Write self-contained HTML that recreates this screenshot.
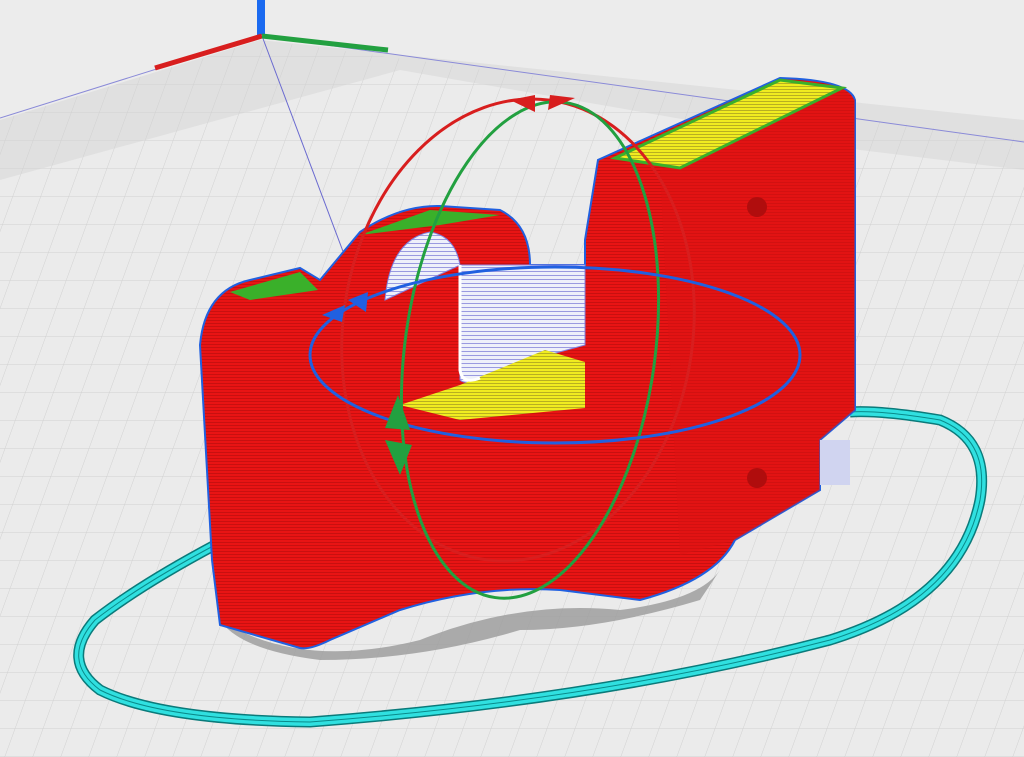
<!DOCTYPE html>
<html><head><meta charset="utf-8"><style>
html,body{margin:0;padding:0;width:1024px;height:757px;overflow:hidden;background:#e9e9e9}
svg{display:block}
</style></head><body>
<svg width="1024" height="757" viewBox="0 0 1024 757" xmlns="http://www.w3.org/2000/svg">
<defs>
<pattern id="g" width="28" height="28" patternUnits="userSpaceOnUse" patternTransform="skewX(-20)">
<path d="M28 0H0V28" fill="none" stroke="#d0d0d0" stroke-width="1"/>
</pattern>
<pattern id="rl" width="4" height="3" patternUnits="userSpaceOnUse">
<rect width="4" height="3" fill="#e81414"/><rect y="2" width="4" height="1" fill="#c81010"/>
</pattern>
<pattern id="yl" width="4" height="3" patternUnits="userSpaceOnUse">
<rect width="4" height="3" fill="#f0ec20"/><rect y="2" width="4" height="1" fill="#b8b020"/>
</pattern>
<pattern id="bl" width="6" height="4" patternUnits="userSpaceOnUse">
<rect width="6" height="4" fill="#eef0fa"/><rect y="3" width="6" height="1" fill="#9a9ae0"/>
</pattern>
</defs>
<rect width="1024" height="757" fill="#ececec"/>
<polygon points="0,120 260,40 1024,140 1024,757 0,757" fill="#ebebeb"/>
<polygon points="0,120 260,40 1024,140 1024,757 0,757" fill="url(#g)"/>
<polygon points="0,120 260,40 1024,120 1024,170 860,150 400,70 0,180" fill="#d2d2d2" opacity="0.45"/>
<line x1="0" y1="118" x2="262" y2="36" stroke="#8a8ad8" stroke-width="1"/>
<line x1="262" y1="36" x2="1024" y2="142" stroke="#8a8ad8" stroke-width="1"/>
<line x1="262" y1="36" x2="350" y2="270" stroke="#6a6ad0" stroke-width="1"/>
<path d="M220 620 Q300 670 420 640 Q520 600 620 610 Q700 600 720 570 L700 600 Q600 630 520 630 Q420 660 320 660 Q240 650 220 620Z" fill="#9a9a9a" opacity="0.8"/>
<g fill="none">
<path id="sk" d="M215 545 Q140 585 95 620 Q60 660 100 690 Q160 720 310 722 Q600 700 830 640 Q960 600 980 500 Q990 440 940 420 Q880 410 850 412" stroke="#0a7a7a" stroke-width="11"/>
<path d="M215 545 Q140 585 95 620 Q60 660 100 690 Q160 720 310 722 Q600 700 830 640 Q960 600 980 500 Q990 440 940 420 Q880 410 850 412" stroke="#30e0e0" stroke-width="8"/>
<path d="M215 545 Q140 585 95 620 Q60 660 100 690 Q160 720 310 722 Q600 700 830 640 Q960 600 980 500 Q990 440 940 420 Q880 410 850 412" stroke="#0a8a8a" stroke-width="1"/>
</g>
<path d="M200 345 Q205 290 250 280 L300 268 L320 280 L360 232 Q400 205 440 206 L500 210 Q530 225 530 265 L585 265 L585 240 L598 160 L780 78 Q850 80 855 100 L855 410 L820 440 L820 490 L735 540 Q715 580 640 600 L560 590 Q480 585 400 610 L330 640 Q310 650 300 648 L220 625 L212 560 Z" fill="url(#rl)" stroke="#2060e0" stroke-width="2"/>
<polygon points="660,170 840,88 855,100 855,410 820,440 820,490 735,540 680,555" fill="#dc1212" opacity="0.5"/>
<polygon points="615,158 780,80 842,88 680,168" fill="url(#yl)" stroke="#3ab02a" stroke-width="3"/>
<path d="M385 300 Q390 240 430 232 Q455 236 460 265 L460 380 Q470 390 530 360 L585 345 L585 265 L530 265 Q470 265 460 265 Z" fill="url(#bl)" stroke="#8080e0" stroke-width="1"/>
<polygon points="400,405 460,385 545,350 585,362 585,408 460,420" fill="url(#yl)"/>
<path d="M460 265 L460 370 Q462 385 480 378" fill="none" stroke="#fff" stroke-width="3"/>
<polygon points="230,292 300,272 318,290 250,300" fill="#3ab02a"/>
<polygon points="360,235 430,210 500,215 440,225" fill="#3ab02a"/>
<circle cx="757" cy="207" r="10" fill="#b00d0d"/>
<circle cx="757" cy="478" r="10" fill="#b00d0d"/>
<rect x="820" y="440" width="30" height="45" fill="#d0d4f0"/>
<ellipse cx="518" cy="330" rx="175" ry="232" transform="rotate(8 518 330)" fill="none" stroke="#d81e1e" stroke-width="3"/>
<ellipse cx="530" cy="350" rx="125" ry="250" transform="rotate(8 530 350)" fill="none" stroke="#22a040" stroke-width="3"/>
<ellipse cx="555" cy="355" rx="245" ry="88" fill="none" stroke="#2060e0" stroke-width="3"/>
<polygon points="510,100 535,95 535,112" fill="#d81e1e"/>
<polygon points="548,110 575,98 550,95" fill="#d81e1e"/>
<polygon points="398,395 385,428 410,430" fill="#22a040"/>
<polygon points="385,440 400,475 412,445" fill="#22a040"/>
<polygon points="322,315 345,305 342,322" fill="#2060e0"/>
<polygon points="348,300 368,292 366,312" fill="#2060e0"/>
<rect x="257" y="0" width="8" height="35" fill="#1a6af0"/>
<line x1="262" y1="36" x2="155" y2="68" stroke="#d81e1e" stroke-width="5"/>
<line x1="262" y1="36" x2="388" y2="50" stroke="#22a040" stroke-width="5"/>
</svg>
</body></html>
